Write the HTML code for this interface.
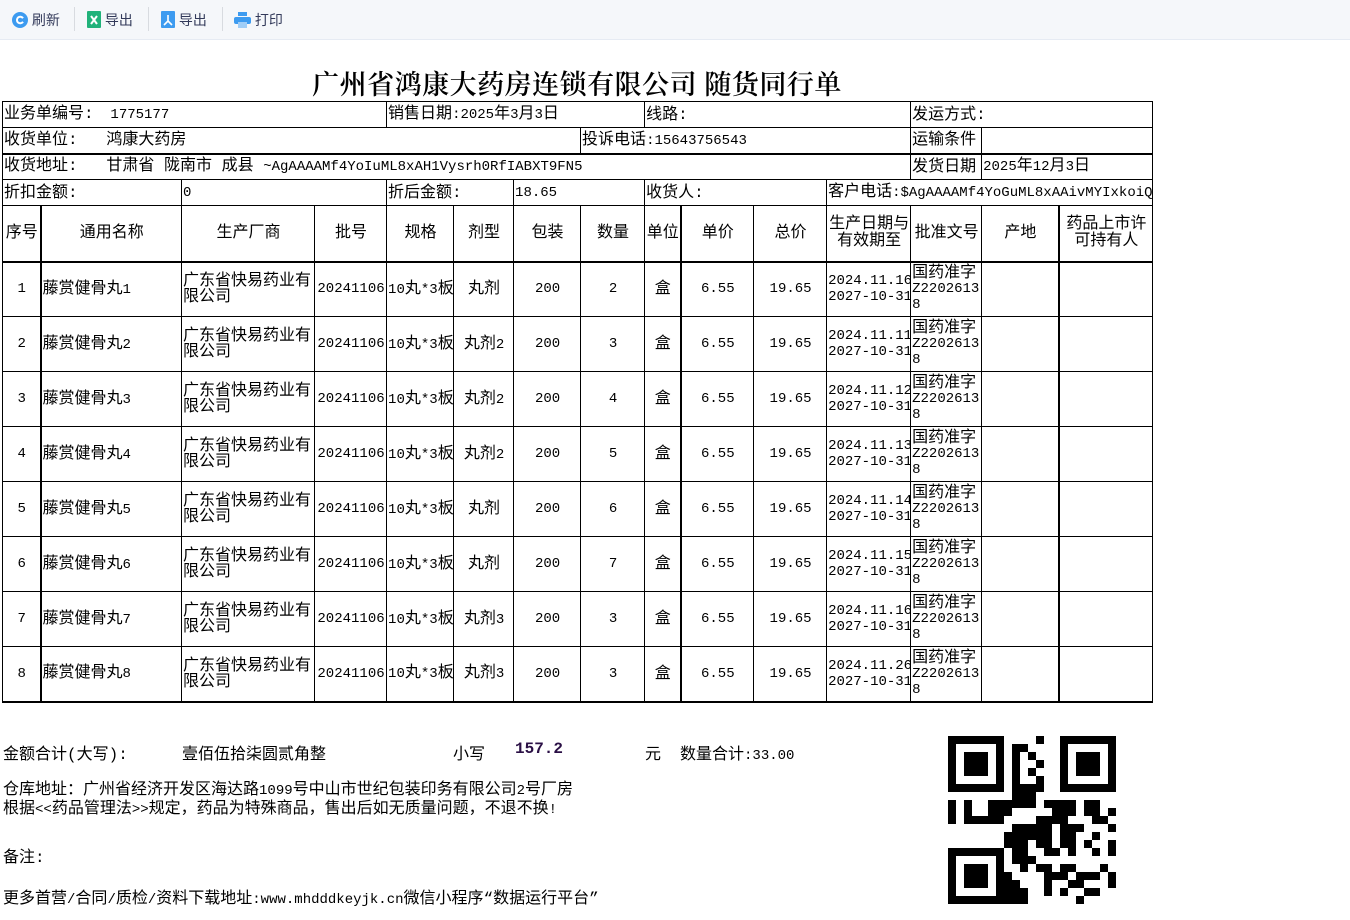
<!DOCTYPE html>
<html><head><meta charset="utf-8">
<style>
*{margin:0;padding:0;box-sizing:border-box}
body{width:1350px;height:920px;background:#fff;position:relative;overflow:hidden;font-family:"Liberation Mono","Noto Sans CJK SC",monospace;font-size:16px;color:#000}
.n{font-size:14px}
.tb{position:absolute;left:0;top:0;width:1350px;height:40px;background:#f5f7fa;border-bottom:1px solid #e6ebf3}
.btn{position:absolute;top:10px;height:20px;font-family:"Liberation Sans","Noto Sans CJK SC",sans-serif;font-size:14px;color:#333a5a;line-height:20px}
.sep{position:absolute;top:7px;width:1px;height:24px;background:#d8dbe0}
.title{position:absolute;left:0;width:1154px;top:63px;text-align:center;font-family:"Liberation Serif","Noto Serif CJK SC",serif;font-size:27px;letter-spacing:0.5px;font-weight:600}
table{position:absolute;left:2px;top:101px;border-collapse:collapse;table-layout:fixed;width:1150px}
td{border:1px solid #000;padding:0 0 0 1px;white-space:nowrap;overflow:hidden;line-height:18px;font-size:16px}
tr.i td{height:26px}
tr.h td{height:56px;text-align:center;font-size:16px}
tr.d td{height:55px;text-align:center}
td>div.c{height:53px;overflow:hidden;display:flex;flex-direction:column;justify-content:center;line-height:16px}
.l{text-align:left!important}
.w{white-space:normal!important;word-break:break-all}
.tl td{border-bottom:2px solid #000}
.tk{border-right:2px solid #000!important}
.ft{position:absolute;font-family:"Liberation Mono","Noto Sans CJK SC",monospace;font-size:16px;white-space:nowrap}
.qr{position:absolute;left:948px;top:736px;width:168px;height:168px}
</style></head><body>
<div class="tb">
 <div class="btn" style="left:12px"><svg width="16" height="16" style="vertical-align:-3px"><circle cx="8" cy="8" r="8" fill="#3d9bf0"/><path d="M11 6.2A3.3 3.3 0 1 0 11 9.8" stroke="#fff" stroke-width="2" fill="none"/></svg> 刷新</div>
 <div class="sep" style="left:74px"></div>
 <div class="btn" style="left:87px"><svg width="14" height="17" style="vertical-align:-3px"><rect width="14" height="17" rx="1" fill="#20b27a"/><path d="M4 5l6 8M10 5l-6 8" stroke="#fff" stroke-width="2"/></svg> 导出</div>
 <div class="sep" style="left:148px"></div>
 <div class="btn" style="left:161px"><svg width="14" height="17" style="vertical-align:-3px"><rect width="14" height="17" rx="1" fill="#3d9bf0"/><path d="M7 4v6l-4 4M7 10l4 4" stroke="#fff" stroke-width="1.6" fill="none"/></svg> 导出</div>
 <div class="sep" style="left:222px"></div>
 <div class="btn" style="left:234px"><svg width="17" height="16" style="vertical-align:-3px"><rect x="4" y="0" width="9" height="4" fill="#3d9bf0"/><rect x="0" y="5" width="17" height="7" rx="2" fill="#3d9bf0"/><rect x="4" y="10" width="9" height="6" fill="#9fcdf7"/></svg> 打印</div>
</div>
<div class="title">广州省鸿康大药房连锁有限公司 随货同行单</div>
<table>
<colgroup><col style="width:38px"><col style="width:141px"><col style="width:133px"><col style="width:72px"><col style="width:67px"><col style="width:60px"><col style="width:67px"><col style="width:64px"><col style="width:36px"><col style="width:73px"><col style="width:73px"><col style="width:84px"><col style="width:71px"><col style="width:77px"><col style="width:94px"></colgroup>
<tr class="i"><td colspan="4">业务单编号:<span class="n">&nbsp;&nbsp;1775177</span></td><td colspan="4">销售日期<span class="n">:2025</span>年<span class="n">3</span>月<span class="n">3</span>日</td><td colspan="4">线路:</td><td colspan="3">发运方式:</td></tr>
<tr class="i tl"><td colspan="7">收货单位:&nbsp;&nbsp;&nbsp;鸿康大药房</td><td colspan="5">投诉电话<span class="n">:15643756543</span></td><td>运输条件</td><td colspan="2"></td></tr>
<tr class="i"><td colspan="12">收货地址:&nbsp;&nbsp;&nbsp;甘肃省 陇南市 成县 <span class="n">~AgAAAAMf4YoIuML8xAH1Vysrh0RfIABXT9FN5</span></td><td>发货日期</td><td colspan="2"><span class="n">2025</span>年<span class="n">12</span>月<span class="n">3</span>日</td></tr>
<tr class="i"><td colspan="2">折扣金额:</td><td colspan="2"><span class="n">0</span></td><td colspan="2">折后金额:</td><td colspan="2"><span class="n">18.65</span></td><td colspan="3">收货人:</td><td colspan="4">客户电话<span class="n">:$AgAAAAMf4YoGuML8xAAivMYIxkoiQ</span></td></tr>
<tr class="h tl"><td class="tk">序号</td><td>通用名称</td><td>生产厂商</td><td>批号</td><td>规格</td><td>剂型</td><td>包装</td><td>数量</td><td class="tk">单位</td><td>单价</td><td>总价</td><td class="w" style="line-height:17px">生产日期与有效期至</td><td>批准文号</td><td class="tk">产地</td><td class="w" style="line-height:17px">药品上市许可持有人</td></tr>
<tr class="d"><td class="tk n">1</td><td class="l">藤赏健骨丸<span class="n">1</span></td><td class="l w"><div class="c">广东省快易药业有限公司</div></td><td class="n">20241106</td><td class="l"><span class="n">10</span>丸<span class="n">*3</span>板</td><td>丸剂</td><td class="n">200</td><td class="n">2</td><td class="tk">盒</td><td class="n">6.55</td><td class="n">19.65</td><td class="l n"><div class="c">2024.11.16<br>2027-10-31</div></td><td class="l w"><div class="c">国药准字<span class="n">Z2202613 8</span></div></td><td class="tk"></td><td></td></tr>
<tr class="d"><td class="tk n">2</td><td class="l">藤赏健骨丸<span class="n">2</span></td><td class="l w"><div class="c">广东省快易药业有限公司</div></td><td class="n">20241106</td><td class="l"><span class="n">10</span>丸<span class="n">*3</span>板</td><td>丸剂<span class="n">2</span></td><td class="n">200</td><td class="n">3</td><td class="tk">盒</td><td class="n">6.55</td><td class="n">19.65</td><td class="l n"><div class="c">2024.11.11<br>2027-10-31</div></td><td class="l w"><div class="c">国药准字<span class="n">Z2202613 8</span></div></td><td class="tk"></td><td></td></tr>
<tr class="d"><td class="tk n">3</td><td class="l">藤赏健骨丸<span class="n">3</span></td><td class="l w"><div class="c">广东省快易药业有限公司</div></td><td class="n">20241106</td><td class="l"><span class="n">10</span>丸<span class="n">*3</span>板</td><td>丸剂<span class="n">2</span></td><td class="n">200</td><td class="n">4</td><td class="tk">盒</td><td class="n">6.55</td><td class="n">19.65</td><td class="l n"><div class="c">2024.11.12<br>2027-10-31</div></td><td class="l w"><div class="c">国药准字<span class="n">Z2202613 8</span></div></td><td class="tk"></td><td></td></tr>
<tr class="d"><td class="tk n">4</td><td class="l">藤赏健骨丸<span class="n">4</span></td><td class="l w"><div class="c">广东省快易药业有限公司</div></td><td class="n">20241106</td><td class="l"><span class="n">10</span>丸<span class="n">*3</span>板</td><td>丸剂<span class="n">2</span></td><td class="n">200</td><td class="n">5</td><td class="tk">盒</td><td class="n">6.55</td><td class="n">19.65</td><td class="l n"><div class="c">2024.11.13<br>2027-10-31</div></td><td class="l w"><div class="c">国药准字<span class="n">Z2202613 8</span></div></td><td class="tk"></td><td></td></tr>
<tr class="d"><td class="tk n">5</td><td class="l">藤赏健骨丸<span class="n">5</span></td><td class="l w"><div class="c">广东省快易药业有限公司</div></td><td class="n">20241106</td><td class="l"><span class="n">10</span>丸<span class="n">*3</span>板</td><td>丸剂</td><td class="n">200</td><td class="n">6</td><td class="tk">盒</td><td class="n">6.55</td><td class="n">19.65</td><td class="l n"><div class="c">2024.11.14<br>2027-10-31</div></td><td class="l w"><div class="c">国药准字<span class="n">Z2202613 8</span></div></td><td class="tk"></td><td></td></tr>
<tr class="d"><td class="tk n">6</td><td class="l">藤赏健骨丸<span class="n">6</span></td><td class="l w"><div class="c">广东省快易药业有限公司</div></td><td class="n">20241106</td><td class="l"><span class="n">10</span>丸<span class="n">*3</span>板</td><td>丸剂</td><td class="n">200</td><td class="n">7</td><td class="tk">盒</td><td class="n">6.55</td><td class="n">19.65</td><td class="l n"><div class="c">2024.11.15<br>2027-10-31</div></td><td class="l w"><div class="c">国药准字<span class="n">Z2202613 8</span></div></td><td class="tk"></td><td></td></tr>
<tr class="d"><td class="tk n">7</td><td class="l">藤赏健骨丸<span class="n">7</span></td><td class="l w"><div class="c">广东省快易药业有限公司</div></td><td class="n">20241106</td><td class="l"><span class="n">10</span>丸<span class="n">*3</span>板</td><td>丸剂<span class="n">3</span></td><td class="n">200</td><td class="n">3</td><td class="tk">盒</td><td class="n">6.55</td><td class="n">19.65</td><td class="l n"><div class="c">2024.11.16<br>2027-10-31</div></td><td class="l w"><div class="c">国药准字<span class="n">Z2202613 8</span></div></td><td class="tk"></td><td></td></tr>
<tr class="d tl"><td class="tk n">8</td><td class="l">藤赏健骨丸<span class="n">8</span></td><td class="l w"><div class="c">广东省快易药业有限公司</div></td><td class="n">20241106</td><td class="l"><span class="n">10</span>丸<span class="n">*3</span>板</td><td>丸剂<span class="n">3</span></td><td class="n">200</td><td class="n">3</td><td class="tk">盒</td><td class="n">6.55</td><td class="n">19.65</td><td class="l n"><div class="c">2024.11.26<br>2027-10-31</div></td><td class="l w"><div class="c">国药准字<span class="n">Z2202613 8</span></div></td><td class="tk"></td><td></td></tr>
</table>
<div class="ft" style="left:3px;top:740px">金额合计(大写):</div>
<div class="ft" style="left:182px;top:740px">壹佰伍拾柒圆贰角整</div>
<div class="ft" style="left:453px;top:740px">小写</div>
<div class="ft" style="left:515px;top:740px;font-size:16px;font-weight:bold;color:#2a0f45">157.2</div>
<div class="ft" style="left:645px;top:740px">元</div>
<div class="ft" style="left:680px;top:740px">数量合计<span class="n">:33.00</span></div>
<div class="ft" style="left:3px;top:781px;line-height:18px">仓库地址：广州省经济开发区海达路<span class="n">1099</span>号中山市世纪包装印务有限公司<span class="n">2</span>号厂房<br>根据<span class="n">&lt;&lt;</span>药品管理法<span class="n">&gt;&gt;</span>规定，药品为特殊商品，售出后如无质量问题，不退不换<span class="n">!</span></div>
<div class="ft" style="left:3px;top:843px">备注:</div>
<div class="ft" style="left:3px;top:884px">更多首营<span class="n">/</span>合同<span class="n">/</span>质检<span class="n">/</span>资料下载地址<span class="n">:www.mhdddkeyjk.cn</span>微信小程序“数据运行平台”</div>
<svg class="qr" viewBox="0 0 21 21" shape-rendering="crispEdges">
<g fill="#000">
<path d="M0 0h7v7h-7zM1 1v5h5v-5zM2 2h3v3h-3z" fill-rule="evenodd"/>
<path d="M14 0h7v7h-7zM15 1v5h5v-5zM16 2h3v3h-3z" fill-rule="evenodd"/>
<path d="M0 14h7v7h-7zM1 15v5h5v-5zM2 16h3v3h-3z" fill-rule="evenodd"/>
<rect x="8" y="1" width="1" height="2"/><rect x="9" y="1" width="1" height="1"/><rect x="11" y="0" width="1" height="1"/><rect x="10" y="2" width="1" height="1"/>
<rect x="8" y="3" width="1" height="3"/><rect x="11" y="3" width="1" height="1"/><rect x="10" y="4" width="1" height="1"/><rect x="11" y="5" width="1" height="2"/>
<rect x="8" y="6" width="3" height="3"/><rect x="9" y="8" width="2" height="1"/>
<rect x="0" y="8" width="1" height="3"/><rect x="2" y="8" width="1" height="3"/><rect x="2" y="10" width="5" height="1"/><rect x="5" y="8" width="2" height="1"/><rect x="6" y="8" width="1" height="3"/><rect x="5" y="9" width="1" height="1"/><rect x="7" y="8" width="1" height="2"/>
<rect x="12" y="8" width="4" height="1"/><rect x="13" y="9" width="3" height="1"/><rect x="17" y="8" width="2" height="2"/><rect x="20" y="9" width="1" height="1"/><rect x="18" y="10" width="2" height="1"/><rect x="11" y="10" width="4" height="1"/><rect x="20" y="11" width="1" height="1"/>
<rect x="8" y="11" width="5" height="1"/><rect x="7" y="12" width="6" height="1"/><rect x="14" y="11" width="3" height="1"/><rect x="14" y="12" width="2" height="2"/><rect x="18" y="12" width="1" height="1"/>
<rect x="7" y="13" width="3" height="1"/><rect x="11" y="13" width="2" height="1"/><rect x="17" y="13" width="1" height="1"/><rect x="20" y="13" width="1" height="2"/>
<rect x="8" y="14" width="2" height="2"/><rect x="10" y="15" width="1" height="1"/><rect x="12" y="14" width="2" height="1"/><rect x="15" y="14" width="1" height="1"/><rect x="18" y="14" width="1" height="1"/>
<rect x="9" y="16" width="1" height="1"/><rect x="11" y="16" width="2" height="1"/><rect x="14" y="16" width="2" height="1"/><rect x="16" y="17" width="3" height="1"/><rect x="19" y="16" width="1" height="1"/>
<rect x="7" y="17" width="1" height="1"/><rect x="12" y="17" width="3" height="1"/><rect x="20" y="17" width="1" height="2"/>
<rect x="7" y="18" width="2" height="3"/><rect x="9" y="19" width="1" height="2"/><rect x="12" y="18" width="1" height="2"/><rect x="15" y="18" width="2" height="1"/><rect x="17" y="19" width="2" height="1"/><rect x="16" y="20" width="1" height="1"/><rect x="14" y="19" width="1" height="1"/>
</g></svg>
</body></html>
